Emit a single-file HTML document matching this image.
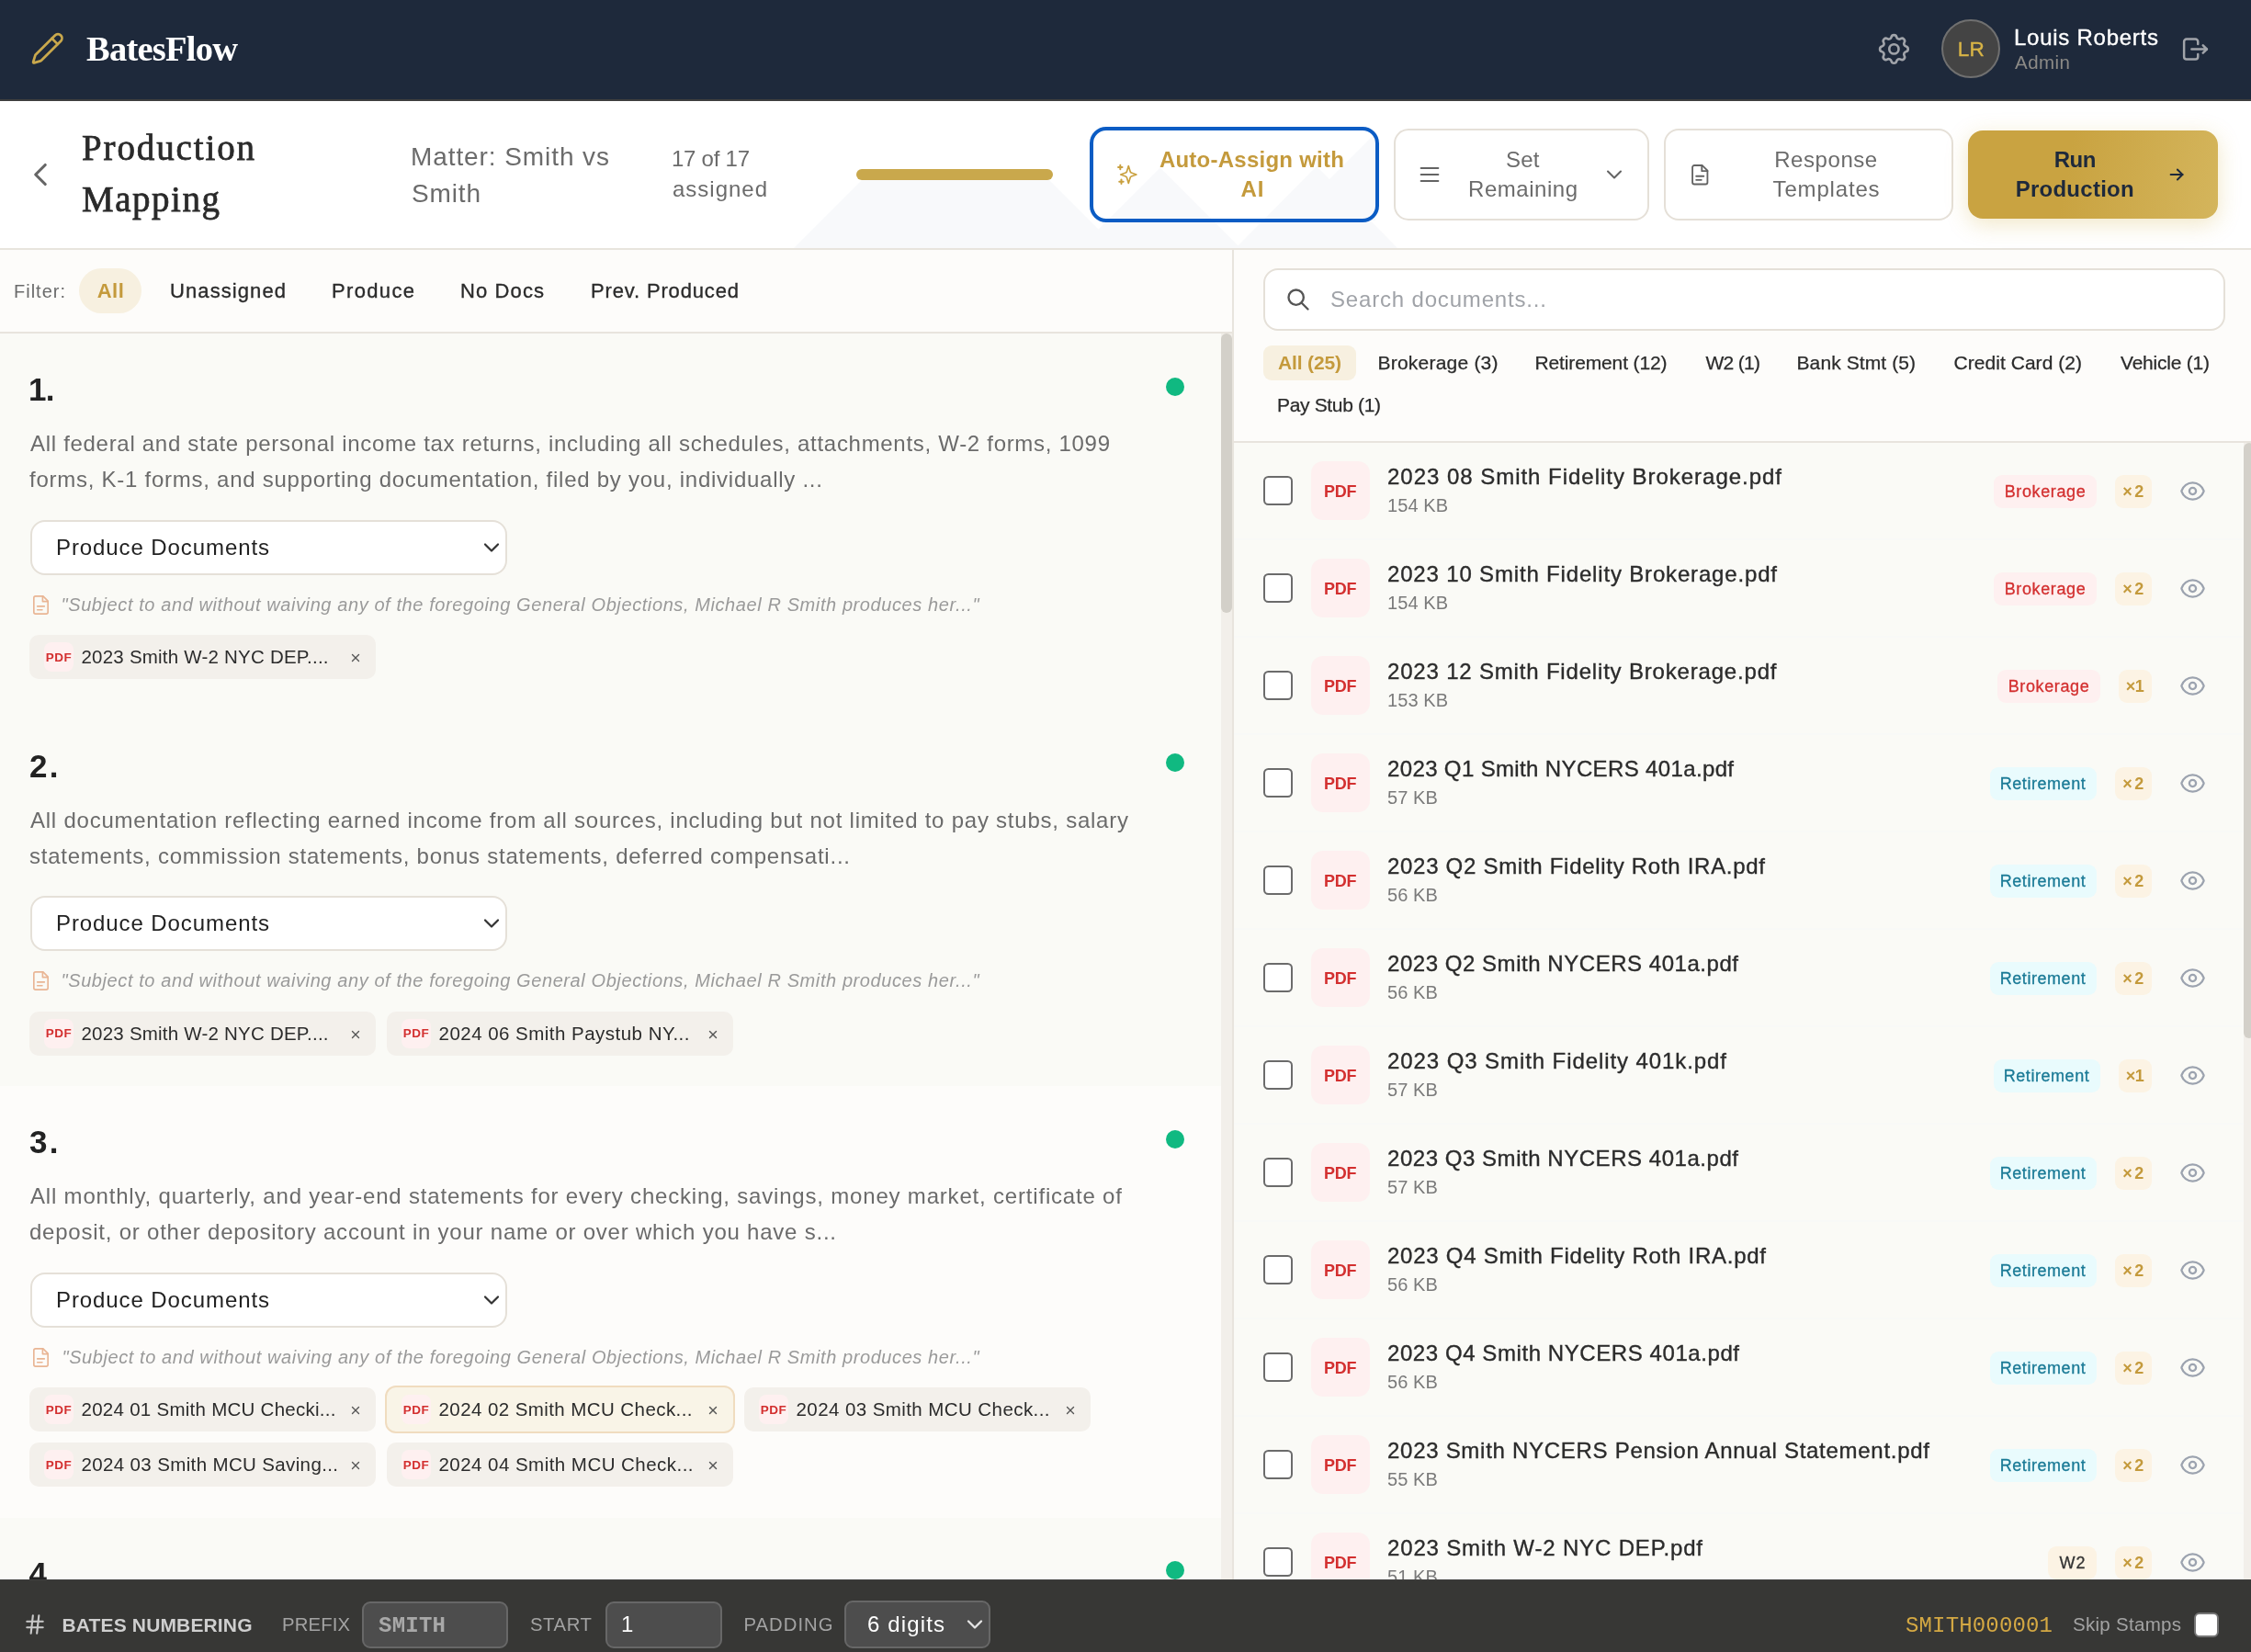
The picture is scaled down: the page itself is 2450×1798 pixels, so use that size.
<!DOCTYPE html>
<html lang="en"><head><meta charset="utf-8"><title>BatesFlow – Production Mapping</title>
<style>
html,body{margin:0;padding:0}
body{width:2450px;height:1798px;overflow:hidden;position:relative;background:#fdfcfa;font-family:"Liberation Sans",sans-serif}
.b{position:absolute;box-sizing:border-box}
.t{position:absolute;white-space:nowrap;display:block}
.g{position:absolute;left:0;top:0}
#app{position:absolute;left:0;top:0;width:2450px;height:1798px;will-change:transform}
@media (max-width:1400px){body{width:1225px;height:899px}#app{zoom:.5}}
</style></head><body><div id="app">

<header class="g">
<div class="b" style="left:0px;top:0px;width:2450px;height:110px;background:#1e293b;border-bottom:2px solid #3e3e3e;"></div>
<svg class="b" style="left:33.0px;top:33.9px;" width="37.6" height="37.6" viewBox="0 0 24 24" fill="none" stroke="#c9a84c" stroke-width="1.75" stroke-linecap="round" stroke-linejoin="round"><path d="M21.174 6.812a1 1 0 0 0-3.986-3.987L3.842 16.174a2 2 0 0 0-.5.83l-1.321 4.352a.5.5 0 0 0 .623.622l4.353-1.32a2 2 0 0 0 .83-.497z"/><path d="m15 5 4 4"/></svg>
<span class="t" id="logo" style="top:34.00px;font:700 38.5px/38.5px 'Liberation Serif', serif;color:#ffffff;letter-spacing:-0.762px;left:94.00px;">BatesFlow</span>
<svg class="b" style="left:2040.6px;top:32.6px;" width="40.8" height="40.8" viewBox="0 0 24 24" fill="none" stroke="#a1a4aa" stroke-width="1.55" stroke-linecap="round" stroke-linejoin="round"><path d="M10.325 4.317c.426 -1.756 2.924 -1.756 3.35 0a1.724 1.724 0 0 0 2.573 1.066c1.543 -.94 3.31 .826 2.37 2.37a1.724 1.724 0 0 0 1.065 2.572c1.756 .426 1.756 2.924 0 3.35a1.724 1.724 0 0 0 -1.066 2.573c.94 1.543 -.826 3.31 -2.37 2.37a1.724 1.724 0 0 0 -2.572 1.065c-.426 1.756 -2.924 1.756 -3.35 0a1.724 1.724 0 0 0 -2.573 -1.066c-1.543 .94 -3.31 -.826 -2.37 -2.37a1.724 1.724 0 0 0 -1.065 -2.572c-1.756 -.426 -1.756 -2.924 0 -3.35a1.724 1.724 0 0 0 1.066 -2.573c-.94 -1.543 .826 -3.31 2.37 -2.37c1 .608 2.296 .07 2.572 -1.065z"/><circle cx="12" cy="12" r="3"/></svg>
<div class="b" style="left:2113px;top:21px;width:64px;height:64px;background:#444444;border-radius:32px;border:2px solid #707070;"></div>
<span class="t" id="lr" style="top:43.00px;font:400 22.5px/22.5px 'Liberation Sans', sans-serif;color:#d8b446;letter-spacing:0.225px;-webkit-text-stroke:0.4px #d8b446;left:2145.40px;transform:translateX(-50%);">LR</span>
<span class="t" id="uname" style="top:29.00px;font:400 24px/24px 'Liberation Sans', sans-serif;color:#ffffff;letter-spacing:0.743px;-webkit-text-stroke:0.35px #ffffff;left:2192.00px;">Louis Roberts</span>
<span class="t" id="urole" style="top:58.00px;font:400 20.5px/20.5px 'Liberation Sans', sans-serif;color:#8c8a86;letter-spacing:0.470px;left:2193.00px;">Admin</span>
<svg class="b" style="left:2373.4px;top:36.6px;" width="33" height="33" viewBox="0 0 24 24" fill="none" stroke="#a1a4aa" stroke-width="1.8" stroke-linecap="round" stroke-linejoin="round"><path d="M14 8v-2a2 2 0 0 0 -2 -2h-7a2 2 0 0 0 -2 2v12a2 2 0 0 0 2 2h7a2 2 0 0 0 2 -2v-2"/><path d="M9 12h12l-3 -3"/><path d="M18 15l3 -3"/></svg>
</header>
<section class="g">
<div class="b" style="left:0px;top:110px;width:2450px;height:162px;background:#ffffff;border-bottom:2px solid #e8e4dd;"></div>
<svg class="b" style="left:0;top:110px" width="2450" height="160" viewBox="0 110 2450 160"><g fill="#f8f9fb"><polygon points="938,196 1142,196 1216,270 864,270"/><polygon points="1262.7,182.5 1350.2,270 1175.2,270"/><polygon points="1433,181 1521,270 1345,270"/><polygon points="1444,198 1497,145 1497,240 1488,240"/></g></svg>
<svg class="b" style="left:22.5px;top:169px;" width="42" height="42" viewBox="0 0 24 24" fill="none" stroke="#666666" stroke-width="1.8" stroke-linecap="round" stroke-linejoin="round"><path d="m15 18-6-6 6-6"/></svg>
<span class="t" id="h1a" style="top:141.00px;font:400 39px/39px 'Liberation Serif', serif;color:#2a2a2a;letter-spacing:1.871px;-webkit-text-stroke:0.75px #2a2a2a;left:89.00px;">Production</span>
<span class="t" id="h1b" style="top:197.00px;font:400 39px/39px 'Liberation Serif', serif;color:#2a2a2a;letter-spacing:1.529px;-webkit-text-stroke:0.75px #2a2a2a;left:89.00px;">Mapping</span>
<span class="t" id="matter1" style="top:157.00px;font:400 28px/28px 'Liberation Sans', sans-serif;color:#6b6b6b;letter-spacing:0.916px;left:447.00px;">Matter: Smith vs</span>
<span class="t" id="matter2" style="top:197.00px;font:400 28px/28px 'Liberation Sans', sans-serif;color:#6b6b6b;letter-spacing:0.855px;left:448.00px;">Smith</span>
<span class="t" id="cnt1" style="top:161.00px;font:400 24px/24px 'Liberation Sans', sans-serif;color:#6b6b6b;letter-spacing:-0.250px;left:731.00px;">17 of 17</span>
<span class="t" id="cnt2" style="top:194.00px;font:400 24px/24px 'Liberation Sans', sans-serif;color:#6b6b6b;letter-spacing:0.989px;left:732.00px;">assigned</span>
<div class="b" style="left:932px;top:184px;width:214px;height:12px;background:#c9a84c;border-radius:6px;"></div>
<div class="b" style="left:1186px;top:138px;width:315px;height:104px;background:#ffffff;border-radius:18px;border:4px solid #0b5cc4;background:transparent;"></div>
<svg class="b" style="left:1213px;top:176px;" width="28" height="28" viewBox="0 0 24 24" fill="none" stroke="#c9a03f" stroke-width="1.7" stroke-linecap="round" stroke-linejoin="round"><g transform="translate(13.1 12) scale(0.82 0.9) translate(-12 -12)"><path d="m12 3-1.912 5.813a2 2 0 0 1-1.275 1.275L3 12l5.813 1.912a2 2 0 0 1 1.275 1.275L12 21l1.912-5.813a2 2 0 0 1 1.275-1.275L21 12l-5.813-1.912a2 2 0 0 1-1.275-1.275L12 3Z"/></g><path d="M5.400 3.200v3.800"/><path d="M3.500 5.100h3.800"/><path d="M6.400 16.800v3.800"/><path d="M4.500 18.700h3.800"/></svg>
<span class="t" id="aa1" style="top:162.00px;font:700 24px/24px 'Liberation Sans', sans-serif;color:#c49a3c;letter-spacing:0.245px;left:1362.50px;transform:translateX(-50%);">Auto-Assign with</span>
<span class="t" id="aa2" style="top:194.00px;font:700 24px/24px 'Liberation Sans', sans-serif;color:#c49a3c;letter-spacing:0.998px;left:1363.50px;transform:translateX(-50%);">AI</span>
<div class="b" style="left:1517px;top:140px;width:277.5px;height:99.5px;background:#ffffff;border-radius:16px;border:2px solid #e5e0d8;"></div>
<svg class="b" style="left:1542px;top:176px;" width="28" height="28" viewBox="0 0 24 24" fill="none" stroke="#636363" stroke-width="1.75" stroke-linecap="round" stroke-linejoin="round"><path d="M4 6h16"/><path d="M4 12h16"/><path d="M4 18h16"/></svg>
<span class="t" id="sr1" style="top:162.00px;font:400 24px/24px 'Liberation Sans', sans-serif;color:#6b6b6b;letter-spacing:0.234px;left:1657.30px;transform:translateX(-50%);">Set</span>
<span class="t" id="sr2" style="top:194.00px;font:400 24px/24px 'Liberation Sans', sans-serif;color:#6b6b6b;letter-spacing:0.533px;left:1657.80px;transform:translateX(-50%);">Remaining</span>
<svg class="b" style="left:1743px;top:176px;" width="28" height="28" viewBox="0 0 24 24" fill="none" stroke="#636363" stroke-width="1.75" stroke-linecap="round" stroke-linejoin="round"><path d="m6 9 6 6 6-6"/></svg>
<div class="b" style="left:1811px;top:140px;width:314.5px;height:99.5px;background:#ffffff;border-radius:16px;border:2px solid #e5e0d8;"></div>
<svg class="b" style="left:1838px;top:177.75px;" width="24.5" height="24.5" viewBox="0 0 24 24" fill="none" stroke="#636363" stroke-width="1.8" stroke-linecap="round" stroke-linejoin="round"><path d="M14.5 2H6a2 2 0 0 0-2 2v16a2 2 0 0 0 2 2h12a2 2 0 0 0 2-2V7.5L14.5 2z"/><path d="M14 2v6h6"/><path d="M8 13.5h8"/><path d="M8 17.5h5.5"/></svg>
<span class="t" id="rt1" style="top:162.00px;font:400 24px/24px 'Liberation Sans', sans-serif;color:#6b6b6b;letter-spacing:0.561px;left:1987.50px;transform:translateX(-50%);">Response</span>
<span class="t" id="rt2" style="top:194.00px;font:400 24px/24px 'Liberation Sans', sans-serif;color:#6b6b6b;letter-spacing:0.828px;left:1988.00px;transform:translateX(-50%);">Templates</span>
<div class="b" style="left:2142px;top:142px;width:272px;height:95.5px;background:linear-gradient(100deg,#c9a341 0%,#c9a341 40%,#d4b55c 100%);border-radius:16px;box-shadow:0 6px 24px rgba(201,162,39,.26);"></div>
<span class="t" id="rp1" style="top:162.00px;font:700 24px/24px 'Liberation Sans', sans-serif;color:#1e293b;letter-spacing:-0.475px;left:2258.30px;transform:translateX(-50%);">Run</span>
<span class="t" id="rp2" style="top:194.00px;font:700 24px/24px 'Liberation Sans', sans-serif;color:#1e293b;letter-spacing:0.261px;left:2258.30px;transform:translateX(-50%);">Production</span>
<svg class="b" style="left:2357.6px;top:179px;" width="22" height="22" viewBox="0 0 24 24" fill="none" stroke="#1e293b" stroke-width="2.1" stroke-linecap="round" stroke-linejoin="round"><path d="M5 12h14"/><path d="M13 18l6-6"/><path d="M13 6l6 6"/></svg>
</section>
<main class="g">
<div class="b" style="left:0px;top:272px;width:1341px;height:91px;background:#fdfcfa;border-bottom:2px solid #e8e4dd;"></div>
<span class="t" id="flt" style="top:307.00px;font:400 20px/20px 'Liberation Sans', sans-serif;color:#6b6b6b;letter-spacing:0.998px;left:15.00px;">Filter:</span>
<div class="b" style="left:86px;top:292px;width:68px;height:49px;background:#f7f0e0;border-radius:25px;"></div>
<span class="t" id="f_all" style="top:306.00px;font:700 22px/22px 'Liberation Sans', sans-serif;color:#c49a3c;letter-spacing:0.439px;left:120.50px;transform:translateX(-50%);">All</span>
<span class="t" id="f0" style="top:306.00px;font:400 22px/22px 'Liberation Sans', sans-serif;color:#2b2b2b;letter-spacing:1.090px;-webkit-text-stroke:0.35px #2b2b2b;left:185.00px;">Unassigned</span>
<span class="t" id="f1" style="top:306.00px;font:400 22px/22px 'Liberation Sans', sans-serif;color:#2b2b2b;letter-spacing:1.341px;-webkit-text-stroke:0.35px #2b2b2b;left:361.00px;">Produce</span>
<span class="t" id="f2" style="top:306.00px;font:400 22px/22px 'Liberation Sans', sans-serif;color:#2b2b2b;letter-spacing:1.106px;-webkit-text-stroke:0.35px #2b2b2b;left:501.00px;">No Docs</span>
<span class="t" id="f3" style="top:306.00px;font:400 22px/22px 'Liberation Sans', sans-serif;color:#2b2b2b;letter-spacing:0.845px;-webkit-text-stroke:0.35px #2b2b2b;left:643.00px;">Prev. Produced</span>
<article class="g">
<div class="b" style="left:0px;top:363px;width:1329px;height:409.5px;background:#fafaf6;"></div>
<span class="t" id="num0" style="top:406.00px;font:700 35px/35px 'Liberation Sans', sans-serif;color:#222222;letter-spacing:-0.600px;left:31.00px;">1.</span>
<div class="b" style="left:1269px;top:410.75px;width:20px;height:20px;background:#10b981;border-radius:10px;"></div>
<span class="t" id="d0_0" style="top:471.00px;font:400 24px/24px 'Liberation Sans', sans-serif;color:#6b6b6b;letter-spacing:0.701px;left:33.00px;">All federal and state personal income tax returns, including all schedules, attachments, W-2 forms, 1099</span>
<span class="t" id="d0_1" style="top:510.00px;font:400 24px/24px 'Liberation Sans', sans-serif;color:#6b6b6b;letter-spacing:0.743px;left:32.00px;">forms, K-1 forms, and supporting documentation, filed by you, individually ...</span>
<div class="b" style="left:32.5px;top:565.5px;width:519px;height:60px;background:#ffffff;border-radius:16px;border:2px solid #e5e0d8;"></div>
<span class="t" id="sel0" style="top:584.00px;font:400 24px/24px 'Liberation Sans', sans-serif;color:#222222;letter-spacing:0.910px;left:61.00px;">Produce Documents</span>
<svg class="b" style="left:520.6px;top:581.5px;" width="28" height="28" viewBox="0 0 24 24" fill="none" stroke="#333333" stroke-width="1.9" stroke-linecap="round" stroke-linejoin="round"><path d="m6 9 6 6 6-6"/></svg>
<svg class="b" style="left:32.5px;top:646.5px;" width="23" height="23" viewBox="0 0 24 24" fill="none" stroke="#e9b594" stroke-width="1.7" stroke-linecap="round" stroke-linejoin="round"><path d="M14.5 2H6a2 2 0 0 0-2 2v16a2 2 0 0 0 2 2h12a2 2 0 0 0 2-2V7.5L14.5 2z"/><path d="M14 2v6h6"/><path d="M8 13.5h8"/><path d="M8 17.5h5.5"/></svg>
<span class="t" id="note0" style="top:648.00px;font:italic 400 20px/20px 'Liberation Sans', sans-serif;color:#9a9a9a;letter-spacing:0.594px;left:66.50px;">&quot;Subject to and without waiving any of the foregoing General Objections, Michael R Smith produces her...&quot;</span>
<div class="b" style="left:32px;top:691px;width:377px;height:48px;background:#f3f0eb;border-radius:10px;"></div>
<div class="b" style="left:48px;top:699px;width:32px;height:32px;background:#fef0f0;border-radius:8px;"></div>
<span class="t" id="cp0_0_0" style="top:709.00px;font:700 13.5px/13.5px 'Liberation Sans', sans-serif;color:#d32f2f;letter-spacing:0.500px;left:64.00px;transform:translateX(-50%);">PDF</span>
<span class="t" id="ch0_0_0" style="top:705.00px;font:400 20.5px/20.5px 'Liberation Sans', sans-serif;color:#2b2b2b;letter-spacing:0.217px;left:88.50px;">2023 Smith W-2 NYC DEP....</span>
<svg class="b" style="left:379.5px;top:709.4px;" width="14" height="14" viewBox="0 0 24 24" fill="none" stroke="#555555" stroke-width="2.4" stroke-linecap="round" stroke-linejoin="round"><path d="M18 6 6 18"/><path d="m6 6 12 12"/></svg>
</article>
<article class="g">
<div class="b" style="left:0px;top:772.5px;width:1329px;height:409.5px;background:#fafaf6;"></div>
<span class="t" id="num1" style="top:816.00px;font:700 35px/35px 'Liberation Sans', sans-serif;color:#222222;letter-spacing:2.400px;left:32.00px;">2.</span>
<div class="b" style="left:1269px;top:820.25px;width:20px;height:20px;background:#10b981;border-radius:10px;"></div>
<span class="t" id="d1_0" style="top:881.00px;font:400 24px/24px 'Liberation Sans', sans-serif;color:#6b6b6b;letter-spacing:0.765px;left:33.00px;">All documentation reflecting earned income from all sources, including but not limited to pay stubs, salary</span>
<span class="t" id="d1_1" style="top:920.00px;font:400 24px/24px 'Liberation Sans', sans-serif;color:#6b6b6b;letter-spacing:0.765px;left:32.00px;">statements, commission statements, bonus statements, deferred compensati...</span>
<div class="b" style="left:32.5px;top:975.0px;width:519px;height:60px;background:#ffffff;border-radius:16px;border:2px solid #e5e0d8;"></div>
<span class="t" id="sel1" style="top:993.00px;font:400 24px/24px 'Liberation Sans', sans-serif;color:#222222;letter-spacing:0.910px;left:61.00px;">Produce Documents</span>
<svg class="b" style="left:520.6px;top:991.0px;" width="28" height="28" viewBox="0 0 24 24" fill="none" stroke="#333333" stroke-width="1.9" stroke-linecap="round" stroke-linejoin="round"><path d="m6 9 6 6 6-6"/></svg>
<svg class="b" style="left:32.5px;top:1056.0px;" width="23" height="23" viewBox="0 0 24 24" fill="none" stroke="#e9b594" stroke-width="1.7" stroke-linecap="round" stroke-linejoin="round"><path d="M14.5 2H6a2 2 0 0 0-2 2v16a2 2 0 0 0 2 2h12a2 2 0 0 0 2-2V7.5L14.5 2z"/><path d="M14 2v6h6"/><path d="M8 13.5h8"/><path d="M8 17.5h5.5"/></svg>
<span class="t" id="note1" style="top:1057.00px;font:italic 400 20px/20px 'Liberation Sans', sans-serif;color:#9a9a9a;letter-spacing:0.594px;left:66.50px;">&quot;Subject to and without waiving any of the foregoing General Objections, Michael R Smith produces her...&quot;</span>
<div class="b" style="left:32px;top:1100.5px;width:377px;height:48px;background:#f3f0eb;border-radius:10px;"></div>
<div class="b" style="left:48px;top:1108.5px;width:32px;height:32px;background:#fef0f0;border-radius:8px;"></div>
<span class="t" id="cp1_0_0" style="top:1118.00px;font:700 13.5px/13.5px 'Liberation Sans', sans-serif;color:#d32f2f;letter-spacing:0.500px;left:64.00px;transform:translateX(-50%);">PDF</span>
<span class="t" id="ch1_0_0" style="top:1115.00px;font:400 20.5px/20.5px 'Liberation Sans', sans-serif;color:#2b2b2b;letter-spacing:0.217px;left:88.50px;">2023 Smith W-2 NYC DEP....</span>
<svg class="b" style="left:379.5px;top:1118.9px;" width="14" height="14" viewBox="0 0 24 24" fill="none" stroke="#555555" stroke-width="2.4" stroke-linecap="round" stroke-linejoin="round"><path d="M18 6 6 18"/><path d="m6 6 12 12"/></svg>
<div class="b" style="left:421px;top:1100.5px;width:377px;height:48px;background:#f3f0eb;border-radius:10px;"></div>
<div class="b" style="left:437px;top:1108.5px;width:32px;height:32px;background:#fef0f0;border-radius:8px;"></div>
<span class="t" id="cp1_0_1" style="top:1118.00px;font:700 13.5px/13.5px 'Liberation Sans', sans-serif;color:#d32f2f;letter-spacing:0.500px;left:453.00px;transform:translateX(-50%);">PDF</span>
<span class="t" id="ch1_0_1" style="top:1115.00px;font:400 20.5px/20.5px 'Liberation Sans', sans-serif;color:#2b2b2b;letter-spacing:0.477px;left:477.50px;">2024 06 Smith Paystub NY...</span>
<svg class="b" style="left:768.5px;top:1118.9px;" width="14" height="14" viewBox="0 0 24 24" fill="none" stroke="#555555" stroke-width="2.4" stroke-linecap="round" stroke-linejoin="round"><path d="M18 6 6 18"/><path d="m6 6 12 12"/></svg>
</article>
<article class="g">
<div class="b" style="left:0px;top:1182px;width:1329px;height:468px;background:#fdfcfa;"></div>
<span class="t" id="num2" style="top:1225.00px;font:700 35px/35px 'Liberation Sans', sans-serif;color:#222222;letter-spacing:2.400px;left:32.00px;">3.</span>
<div class="b" style="left:1269px;top:1229.75px;width:20px;height:20px;background:#10b981;border-radius:10px;"></div>
<span class="t" id="d2_0" style="top:1290.00px;font:400 24px/24px 'Liberation Sans', sans-serif;color:#6b6b6b;letter-spacing:0.811px;left:33.00px;">All monthly, quarterly, and year-end statements for every checking, savings, money market, certificate of</span>
<span class="t" id="d2_1" style="top:1329.00px;font:400 24px/24px 'Liberation Sans', sans-serif;color:#6b6b6b;letter-spacing:0.775px;left:32.00px;">deposit, or other depository account in your name or over which you have s...</span>
<div class="b" style="left:32.5px;top:1384.5px;width:519px;height:60px;background:#ffffff;border-radius:16px;border:2px solid #e5e0d8;"></div>
<span class="t" id="sel2" style="top:1403.00px;font:400 24px/24px 'Liberation Sans', sans-serif;color:#222222;letter-spacing:0.910px;left:61.00px;">Produce Documents</span>
<svg class="b" style="left:520.6px;top:1400.5px;" width="28" height="28" viewBox="0 0 24 24" fill="none" stroke="#333333" stroke-width="1.9" stroke-linecap="round" stroke-linejoin="round"><path d="m6 9 6 6 6-6"/></svg>
<svg class="b" style="left:32.5px;top:1465.5px;" width="23" height="23" viewBox="0 0 24 24" fill="none" stroke="#e9b594" stroke-width="1.7" stroke-linecap="round" stroke-linejoin="round"><path d="M14.5 2H6a2 2 0 0 0-2 2v16a2 2 0 0 0 2 2h12a2 2 0 0 0 2-2V7.5L14.5 2z"/><path d="M14 2v6h6"/><path d="M8 13.5h8"/><path d="M8 17.5h5.5"/></svg>
<span class="t" id="note2" style="top:1467.00px;font:italic 400 20px/20px 'Liberation Sans', sans-serif;color:#9a9a9a;letter-spacing:0.584px;left:67.50px;">&quot;Subject to and without waiving any of the foregoing General Objections, Michael R Smith produces her...&quot;</span>
<div class="b" style="left:32px;top:1510px;width:377px;height:48px;background:#f3f0eb;border-radius:10px;"></div>
<div class="b" style="left:48px;top:1518px;width:32px;height:32px;background:#fef0f0;border-radius:8px;"></div>
<span class="t" id="cp2_0_0" style="top:1528.00px;font:700 13.5px/13.5px 'Liberation Sans', sans-serif;color:#d32f2f;letter-spacing:0.500px;left:64.00px;transform:translateX(-50%);">PDF</span>
<span class="t" id="ch2_0_0" style="top:1524.00px;font:400 20.5px/20.5px 'Liberation Sans', sans-serif;color:#2b2b2b;letter-spacing:0.268px;left:88.50px;">2024 01 Smith MCU Checki...</span>
<svg class="b" style="left:379.5px;top:1528.4px;" width="14" height="14" viewBox="0 0 24 24" fill="none" stroke="#555555" stroke-width="2.4" stroke-linecap="round" stroke-linejoin="round"><path d="M18 6 6 18"/><path d="m6 6 12 12"/></svg>
<div class="b" style="left:419px;top:1508px;width:381px;height:52px;background:#f9f4e7;border-radius:12px;border:2px solid #f0dcbf;"></div>
<div class="b" style="left:437px;top:1518px;width:32px;height:32px;background:#fef0f0;border-radius:8px;"></div>
<span class="t" id="cp2_0_1" style="top:1528.00px;font:700 13.5px/13.5px 'Liberation Sans', sans-serif;color:#d32f2f;letter-spacing:0.500px;left:453.00px;transform:translateX(-50%);">PDF</span>
<span class="t" id="ch2_0_1" style="top:1524.00px;font:400 20.5px/20.5px 'Liberation Sans', sans-serif;color:#2b2b2b;letter-spacing:0.421px;left:477.50px;">2024 02 Smith MCU Check...</span>
<svg class="b" style="left:768.5px;top:1528.4px;" width="14" height="14" viewBox="0 0 24 24" fill="none" stroke="#555555" stroke-width="2.4" stroke-linecap="round" stroke-linejoin="round"><path d="M18 6 6 18"/><path d="m6 6 12 12"/></svg>
<div class="b" style="left:810px;top:1510px;width:377px;height:48px;background:#f3f0eb;border-radius:10px;"></div>
<div class="b" style="left:826px;top:1518px;width:32px;height:32px;background:#fef0f0;border-radius:8px;"></div>
<span class="t" id="cp2_0_2" style="top:1528.00px;font:700 13.5px/13.5px 'Liberation Sans', sans-serif;color:#d32f2f;letter-spacing:0.500px;left:842.00px;transform:translateX(-50%);">PDF</span>
<span class="t" id="ch2_0_2" style="top:1524.00px;font:400 20.5px/20.5px 'Liberation Sans', sans-serif;color:#2b2b2b;letter-spacing:0.421px;left:866.50px;">2024 03 Smith MCU Check...</span>
<svg class="b" style="left:1157.5px;top:1528.4px;" width="14" height="14" viewBox="0 0 24 24" fill="none" stroke="#555555" stroke-width="2.4" stroke-linecap="round" stroke-linejoin="round"><path d="M18 6 6 18"/><path d="m6 6 12 12"/></svg>
<div class="b" style="left:32px;top:1570px;width:377px;height:48px;background:#f3f0eb;border-radius:10px;"></div>
<div class="b" style="left:48px;top:1578px;width:32px;height:32px;background:#fef0f0;border-radius:8px;"></div>
<span class="t" id="cp2_1_0" style="top:1588.00px;font:700 13.5px/13.5px 'Liberation Sans', sans-serif;color:#d32f2f;letter-spacing:0.500px;left:64.00px;transform:translateX(-50%);">PDF</span>
<span class="t" id="ch2_1_0" style="top:1584.00px;font:400 20.5px/20.5px 'Liberation Sans', sans-serif;color:#2b2b2b;letter-spacing:0.362px;left:88.50px;">2024 03 Smith MCU Saving...</span>
<svg class="b" style="left:379.5px;top:1588.4px;" width="14" height="14" viewBox="0 0 24 24" fill="none" stroke="#555555" stroke-width="2.4" stroke-linecap="round" stroke-linejoin="round"><path d="M18 6 6 18"/><path d="m6 6 12 12"/></svg>
<div class="b" style="left:421px;top:1570px;width:377px;height:48px;background:#f3f0eb;border-radius:10px;"></div>
<div class="b" style="left:437px;top:1578px;width:32px;height:32px;background:#fef0f0;border-radius:8px;"></div>
<span class="t" id="cp2_1_1" style="top:1588.00px;font:700 13.5px/13.5px 'Liberation Sans', sans-serif;color:#d32f2f;letter-spacing:0.500px;left:453.00px;transform:translateX(-50%);">PDF</span>
<span class="t" id="ch2_1_1" style="top:1584.00px;font:400 20.5px/20.5px 'Liberation Sans', sans-serif;color:#2b2b2b;letter-spacing:0.461px;left:477.50px;">2024 04 Smith MCU Check...</span>
<svg class="b" style="left:768.5px;top:1588.4px;" width="14" height="14" viewBox="0 0 24 24" fill="none" stroke="#555555" stroke-width="2.4" stroke-linecap="round" stroke-linejoin="round"><path d="M18 6 6 18"/><path d="m6 6 12 12"/></svg>
</article>
<article class="g">
<div class="b" style="left:0px;top:1651.5px;width:1329px;height:410px;background:#fafaf6;"></div>
<span class="t" id="num3" style="top:1695.00px;font:700 35px/35px 'Liberation Sans', sans-serif;color:#222222;letter-spacing:2.400px;left:31.50px;">4.</span>
<div class="b" style="left:1269px;top:1699.25px;width:20px;height:20px;background:#10b981;border-radius:10px;"></div>
</article>
<div class="b" style="left:1329px;top:363px;width:12px;height:1360px;background:#f2efea;"></div>
<div class="b" style="left:1329px;top:363px;width:12px;height:304px;background:#d3d0c9;border-radius:6px;"></div>
</main>
<aside class="g">
<div class="b" style="left:1341px;top:272px;width:1113px;height:1460px;background:#fafaf6;border-left:2px solid #e8e4dd;"></div>
<div class="b" style="left:1343px;top:272px;width:1111px;height:210px;background:#fdfcfa;border-bottom:2px solid #e8e4dd;"></div>
<div class="b" style="left:1375px;top:292px;width:1047px;height:67.5px;background:#ffffff;border-radius:16px;border:2px solid #e5e0d8;"></div>
<svg class="b" style="left:1399px;top:311.5px;" width="28" height="28" viewBox="0 0 24 24" fill="none" stroke="#555555" stroke-width="2" stroke-linecap="round" stroke-linejoin="round"><circle cx="10" cy="10" r="7"/><path d="M21 21l-6 -6"/></svg>
<span class="t" id="srch" style="top:314.00px;font:400 24px/24px 'Liberation Sans', sans-serif;color:#a0a3a8;letter-spacing:0.827px;left:1448.00px;">Search documents...</span>
<div class="b" style="left:1375px;top:376px;width:100.75px;height:38px;background:#f7f0e0;border-radius:9px;"></div>
<span class="t" id="tab0" style="top:384.00px;font:700 21px/21px 'Liberation Sans', sans-serif;color:#c49a3c;letter-spacing:-0.145px;left:1391.00px;">All (25)</span>
<span class="t" id="tab1" style="top:384.00px;font:400 21px/21px 'Liberation Sans', sans-serif;color:#2b2b2b;letter-spacing:0.217px;-webkit-text-stroke:0.25px #2b2b2b;left:1499.50px;">Brokerage (3)</span>
<span class="t" id="tab2" style="top:384.00px;font:400 21px/21px 'Liberation Sans', sans-serif;color:#2b2b2b;letter-spacing:-0.136px;-webkit-text-stroke:0.25px #2b2b2b;left:1670.50px;">Retirement (12)</span>
<span class="t" id="tab3" style="top:384.00px;font:400 21px/21px 'Liberation Sans', sans-serif;color:#2b2b2b;letter-spacing:-0.702px;-webkit-text-stroke:0.25px #2b2b2b;left:1856.50px;">W2 (1)</span>
<span class="t" id="tab4" style="top:384.00px;font:400 21px/21px 'Liberation Sans', sans-serif;color:#2b2b2b;letter-spacing:0.096px;-webkit-text-stroke:0.25px #2b2b2b;left:1955.50px;">Bank Stmt (5)</span>
<span class="t" id="tab5" style="top:384.00px;font:400 21px/21px 'Liberation Sans', sans-serif;color:#2b2b2b;letter-spacing:0.046px;-webkit-text-stroke:0.25px #2b2b2b;left:2126.50px;">Credit Card (2)</span>
<span class="t" id="tab6" style="top:384.00px;font:400 21px/21px 'Liberation Sans', sans-serif;color:#2b2b2b;letter-spacing:-0.222px;-webkit-text-stroke:0.25px #2b2b2b;left:2308.00px;">Vehicle (1)</span>
<span class="t" id="tab7" style="top:430.00px;font:400 21px/21px 'Liberation Sans', sans-serif;color:#2b2b2b;letter-spacing:-0.338px;-webkit-text-stroke:0.25px #2b2b2b;left:1390.00px;">Pay Stub (1)</span>
<div class="g">
<div class="b" style="left:1343px;top:586px;width:1099px;height:2px;background:#f8f9f7;"></div>
<div class="b" style="left:1375px;top:518px;width:32px;height:32px;background:#ffffff;border-radius:5.5px;border:2px solid #6b6b6b;"></div>
<div class="b" style="left:1427px;top:502px;width:64px;height:64px;background:#fef0f0;border-radius:13px;"></div>
<span class="t" id="dp0" style="top:526.00px;font:700 18px/18px 'Liberation Sans', sans-serif;color:#d32f2f;letter-spacing:-0.250px;left:1458.50px;transform:translateX(-50%);">PDF</span>
<span class="t" id="dn0" style="top:507.00px;font:400 24px/24px 'Liberation Sans', sans-serif;color:#2b2b2b;letter-spacing:0.975px;-webkit-text-stroke:0.36px #2b2b2b;left:1510.00px;">2023 08 Smith Fidelity Brokerage.pdf</span>
<span class="t" id="ds0" style="top:540.00px;font:400 20px/20px 'Liberation Sans', sans-serif;color:#7a7a7a;letter-spacing:0.077px;left:1510.00px;">154 KB</span>
<div class="b" style="left:2170px;top:517px;width:112px;height:35.5px;background:#fef0f0;border-radius:9px;"></div>
<span class="t" id="db0" style="top:526.00px;font:400 18px/18px 'Liberation Sans', sans-serif;color:#d32f2f;letter-spacing:0.617px;-webkit-text-stroke:0.3px #d32f2f;left:2226.00px;transform:translateX(-50%);">Brokerage</span>
<div class="b" style="left:2302px;top:517px;width:40px;height:35.5px;background:#fcf3e4;border-radius:9px;"></div>
<span class="t" id="dc0" style="top:526.00px;font:700 18px/18px 'Liberation Sans', sans-serif;color:#c49a3c;letter-spacing:2.400px;left:2323.00px;transform:translateX(-50%);">×2</span>
<svg class="b" style="left:2371.5px;top:519.5px;" width="29" height="29" viewBox="0 0 24 24" fill="none" stroke="#9ca3af" stroke-width="1.9" stroke-linecap="round" stroke-linejoin="round"><path d="M2.036 12.322a1.012 1.012 0 0 1 0-.639C3.423 7.51 7.36 4.5 12 4.5c4.638 0 8.573 3.007 9.963 7.178.07.207.07.431 0 .639C20.577 16.49 16.64 19.5 12 19.5c-4.638 0-8.573-3.007-9.963-7.178Z"/><circle cx="12" cy="12" r="3"/></svg>
</div>
<div class="g">
<div class="b" style="left:1343px;top:692px;width:1099px;height:2px;background:#f8f9f7;"></div>
<div class="b" style="left:1375px;top:624px;width:32px;height:32px;background:#ffffff;border-radius:5.5px;border:2px solid #6b6b6b;"></div>
<div class="b" style="left:1427px;top:608px;width:64px;height:64px;background:#fef0f0;border-radius:13px;"></div>
<span class="t" id="dp1" style="top:632.00px;font:700 18px/18px 'Liberation Sans', sans-serif;color:#d32f2f;letter-spacing:-0.250px;left:1458.50px;transform:translateX(-50%);">PDF</span>
<span class="t" id="dn1" style="top:613.00px;font:400 24px/24px 'Liberation Sans', sans-serif;color:#2b2b2b;letter-spacing:0.832px;-webkit-text-stroke:0.36px #2b2b2b;left:1510.00px;">2023 10 Smith Fidelity Brokerage.pdf</span>
<span class="t" id="ds1" style="top:646.00px;font:400 20px/20px 'Liberation Sans', sans-serif;color:#7a7a7a;letter-spacing:0.077px;left:1510.00px;">154 KB</span>
<div class="b" style="left:2170px;top:623px;width:112px;height:35.5px;background:#fef0f0;border-radius:9px;"></div>
<span class="t" id="db1" style="top:632.00px;font:400 18px/18px 'Liberation Sans', sans-serif;color:#d32f2f;letter-spacing:0.617px;-webkit-text-stroke:0.3px #d32f2f;left:2226.00px;transform:translateX(-50%);">Brokerage</span>
<div class="b" style="left:2302px;top:623px;width:40px;height:35.5px;background:#fcf3e4;border-radius:9px;"></div>
<span class="t" id="dc1" style="top:632.00px;font:700 18px/18px 'Liberation Sans', sans-serif;color:#c49a3c;letter-spacing:2.400px;left:2323.00px;transform:translateX(-50%);">×2</span>
<svg class="b" style="left:2371.5px;top:625.5px;" width="29" height="29" viewBox="0 0 24 24" fill="none" stroke="#9ca3af" stroke-width="1.9" stroke-linecap="round" stroke-linejoin="round"><path d="M2.036 12.322a1.012 1.012 0 0 1 0-.639C3.423 7.51 7.36 4.5 12 4.5c4.638 0 8.573 3.007 9.963 7.178.07.207.07.431 0 .639C20.577 16.49 16.64 19.5 12 19.5c-4.638 0-8.573-3.007-9.963-7.178Z"/><circle cx="12" cy="12" r="3"/></svg>
</div>
<div class="g">
<div class="b" style="left:1343px;top:798px;width:1099px;height:2px;background:#f8f9f7;"></div>
<div class="b" style="left:1375px;top:730px;width:32px;height:32px;background:#ffffff;border-radius:5.5px;border:2px solid #6b6b6b;"></div>
<div class="b" style="left:1427px;top:714px;width:64px;height:64px;background:#fef0f0;border-radius:13px;"></div>
<span class="t" id="dp2" style="top:738.00px;font:700 18px/18px 'Liberation Sans', sans-serif;color:#d32f2f;letter-spacing:-0.250px;left:1458.50px;transform:translateX(-50%);">PDF</span>
<span class="t" id="dn2" style="top:719.00px;font:400 24px/24px 'Liberation Sans', sans-serif;color:#2b2b2b;letter-spacing:0.817px;-webkit-text-stroke:0.36px #2b2b2b;left:1510.00px;">2023 12 Smith Fidelity Brokerage.pdf</span>
<span class="t" id="ds2" style="top:752.00px;font:400 20px/20px 'Liberation Sans', sans-serif;color:#7a7a7a;letter-spacing:0.077px;left:1510.00px;">153 KB</span>
<div class="b" style="left:2174px;top:729px;width:112px;height:35.5px;background:#fef0f0;border-radius:9px;"></div>
<span class="t" id="db2" style="top:738.00px;font:400 18px/18px 'Liberation Sans', sans-serif;color:#d32f2f;letter-spacing:0.617px;-webkit-text-stroke:0.3px #d32f2f;left:2230.00px;transform:translateX(-50%);">Brokerage</span>
<div class="b" style="left:2306px;top:729px;width:36px;height:35.5px;background:#fcf3e4;border-radius:9px;"></div>
<span class="t" id="dc2" style="top:738.00px;font:700 18px/18px 'Liberation Sans', sans-serif;color:#c49a3c;letter-spacing:-0.528px;left:2323.50px;transform:translateX(-50%);">×1</span>
<svg class="b" style="left:2371.5px;top:731.5px;" width="29" height="29" viewBox="0 0 24 24" fill="none" stroke="#9ca3af" stroke-width="1.9" stroke-linecap="round" stroke-linejoin="round"><path d="M2.036 12.322a1.012 1.012 0 0 1 0-.639C3.423 7.51 7.36 4.5 12 4.5c4.638 0 8.573 3.007 9.963 7.178.07.207.07.431 0 .639C20.577 16.49 16.64 19.5 12 19.5c-4.638 0-8.573-3.007-9.963-7.178Z"/><circle cx="12" cy="12" r="3"/></svg>
</div>
<div class="g">
<div class="b" style="left:1343px;top:904px;width:1099px;height:2px;background:#f8f9f7;"></div>
<div class="b" style="left:1375px;top:836px;width:32px;height:32px;background:#ffffff;border-radius:5.5px;border:2px solid #6b6b6b;"></div>
<div class="b" style="left:1427px;top:820px;width:64px;height:64px;background:#fef0f0;border-radius:13px;"></div>
<span class="t" id="dp3" style="top:844.00px;font:700 18px/18px 'Liberation Sans', sans-serif;color:#d32f2f;letter-spacing:-0.250px;left:1458.50px;transform:translateX(-50%);">PDF</span>
<span class="t" id="dn3" style="top:825.00px;font:400 24px/24px 'Liberation Sans', sans-serif;color:#2b2b2b;letter-spacing:0.362px;-webkit-text-stroke:0.36px #2b2b2b;left:1510.00px;">2023 Q1 Smith NYCERS 401a.pdf</span>
<span class="t" id="ds3" style="top:858.00px;font:400 20px/20px 'Liberation Sans', sans-serif;color:#7a7a7a;letter-spacing:0.077px;left:1510.00px;">57 KB</span>
<div class="b" style="left:2166px;top:835px;width:116px;height:35.5px;background:#e9fbfd;border-radius:9px;"></div>
<span class="t" id="db3" style="top:844.00px;font:400 18px/18px 'Liberation Sans', sans-serif;color:#1a7a96;letter-spacing:0.551px;-webkit-text-stroke:0.3px #1a7a96;left:2223.50px;transform:translateX(-50%);">Retirement</span>
<div class="b" style="left:2302px;top:835px;width:40px;height:35.5px;background:#fcf3e4;border-radius:9px;"></div>
<span class="t" id="dc3" style="top:844.00px;font:700 18px/18px 'Liberation Sans', sans-serif;color:#c49a3c;letter-spacing:2.400px;left:2323.00px;transform:translateX(-50%);">×2</span>
<svg class="b" style="left:2371.5px;top:837.5px;" width="29" height="29" viewBox="0 0 24 24" fill="none" stroke="#9ca3af" stroke-width="1.9" stroke-linecap="round" stroke-linejoin="round"><path d="M2.036 12.322a1.012 1.012 0 0 1 0-.639C3.423 7.51 7.36 4.5 12 4.5c4.638 0 8.573 3.007 9.963 7.178.07.207.07.431 0 .639C20.577 16.49 16.64 19.5 12 19.5c-4.638 0-8.573-3.007-9.963-7.178Z"/><circle cx="12" cy="12" r="3"/></svg>
</div>
<div class="g">
<div class="b" style="left:1343px;top:1010px;width:1099px;height:2px;background:#f8f9f7;"></div>
<div class="b" style="left:1375px;top:942px;width:32px;height:32px;background:#ffffff;border-radius:5.5px;border:2px solid #6b6b6b;"></div>
<div class="b" style="left:1427px;top:926px;width:64px;height:64px;background:#fef0f0;border-radius:13px;"></div>
<span class="t" id="dp4" style="top:950.00px;font:700 18px/18px 'Liberation Sans', sans-serif;color:#d32f2f;letter-spacing:-0.250px;left:1458.50px;transform:translateX(-50%);">PDF</span>
<span class="t" id="dn4" style="top:931.00px;font:400 24px/24px 'Liberation Sans', sans-serif;color:#2b2b2b;letter-spacing:0.711px;-webkit-text-stroke:0.36px #2b2b2b;left:1510.00px;">2023 Q2 Smith Fidelity Roth IRA.pdf</span>
<span class="t" id="ds4" style="top:964.00px;font:400 20px/20px 'Liberation Sans', sans-serif;color:#7a7a7a;letter-spacing:0.077px;left:1510.00px;">56 KB</span>
<div class="b" style="left:2166px;top:941px;width:116px;height:35.5px;background:#e9fbfd;border-radius:9px;"></div>
<span class="t" id="db4" style="top:950.00px;font:400 18px/18px 'Liberation Sans', sans-serif;color:#1a7a96;letter-spacing:0.551px;-webkit-text-stroke:0.3px #1a7a96;left:2223.50px;transform:translateX(-50%);">Retirement</span>
<div class="b" style="left:2302px;top:941px;width:40px;height:35.5px;background:#fcf3e4;border-radius:9px;"></div>
<span class="t" id="dc4" style="top:950.00px;font:700 18px/18px 'Liberation Sans', sans-serif;color:#c49a3c;letter-spacing:2.400px;left:2323.00px;transform:translateX(-50%);">×2</span>
<svg class="b" style="left:2371.5px;top:943.5px;" width="29" height="29" viewBox="0 0 24 24" fill="none" stroke="#9ca3af" stroke-width="1.9" stroke-linecap="round" stroke-linejoin="round"><path d="M2.036 12.322a1.012 1.012 0 0 1 0-.639C3.423 7.51 7.36 4.5 12 4.5c4.638 0 8.573 3.007 9.963 7.178.07.207.07.431 0 .639C20.577 16.49 16.64 19.5 12 19.5c-4.638 0-8.573-3.007-9.963-7.178Z"/><circle cx="12" cy="12" r="3"/></svg>
</div>
<div class="g">
<div class="b" style="left:1343px;top:1116px;width:1099px;height:2px;background:#f8f9f7;"></div>
<div class="b" style="left:1375px;top:1048px;width:32px;height:32px;background:#ffffff;border-radius:5.5px;border:2px solid #6b6b6b;"></div>
<div class="b" style="left:1427px;top:1032px;width:64px;height:64px;background:#fef0f0;border-radius:13px;"></div>
<span class="t" id="dp5" style="top:1056.00px;font:700 18px/18px 'Liberation Sans', sans-serif;color:#d32f2f;letter-spacing:-0.250px;left:1458.50px;transform:translateX(-50%);">PDF</span>
<span class="t" id="dn5" style="top:1037.00px;font:400 24px/24px 'Liberation Sans', sans-serif;color:#2b2b2b;letter-spacing:0.541px;-webkit-text-stroke:0.36px #2b2b2b;left:1510.00px;">2023 Q2 Smith NYCERS 401a.pdf</span>
<span class="t" id="ds5" style="top:1070.00px;font:400 20px/20px 'Liberation Sans', sans-serif;color:#7a7a7a;letter-spacing:0.077px;left:1510.00px;">56 KB</span>
<div class="b" style="left:2166px;top:1047px;width:116px;height:35.5px;background:#e9fbfd;border-radius:9px;"></div>
<span class="t" id="db5" style="top:1056.00px;font:400 18px/18px 'Liberation Sans', sans-serif;color:#1a7a96;letter-spacing:0.551px;-webkit-text-stroke:0.3px #1a7a96;left:2223.50px;transform:translateX(-50%);">Retirement</span>
<div class="b" style="left:2302px;top:1047px;width:40px;height:35.5px;background:#fcf3e4;border-radius:9px;"></div>
<span class="t" id="dc5" style="top:1056.00px;font:700 18px/18px 'Liberation Sans', sans-serif;color:#c49a3c;letter-spacing:2.400px;left:2323.00px;transform:translateX(-50%);">×2</span>
<svg class="b" style="left:2371.5px;top:1049.5px;" width="29" height="29" viewBox="0 0 24 24" fill="none" stroke="#9ca3af" stroke-width="1.9" stroke-linecap="round" stroke-linejoin="round"><path d="M2.036 12.322a1.012 1.012 0 0 1 0-.639C3.423 7.51 7.36 4.5 12 4.5c4.638 0 8.573 3.007 9.963 7.178.07.207.07.431 0 .639C20.577 16.49 16.64 19.5 12 19.5c-4.638 0-8.573-3.007-9.963-7.178Z"/><circle cx="12" cy="12" r="3"/></svg>
</div>
<div class="g">
<div class="b" style="left:1343px;top:1222px;width:1099px;height:2px;background:#f8f9f7;"></div>
<div class="b" style="left:1375px;top:1154px;width:32px;height:32px;background:#ffffff;border-radius:5.5px;border:2px solid #6b6b6b;"></div>
<div class="b" style="left:1427px;top:1138px;width:64px;height:64px;background:#fef0f0;border-radius:13px;"></div>
<span class="t" id="dp6" style="top:1162.00px;font:700 18px/18px 'Liberation Sans', sans-serif;color:#d32f2f;letter-spacing:-0.250px;left:1458.50px;transform:translateX(-50%);">PDF</span>
<span class="t" id="dn6" style="top:1143.00px;font:400 24px/24px 'Liberation Sans', sans-serif;color:#2b2b2b;letter-spacing:0.915px;-webkit-text-stroke:0.36px #2b2b2b;left:1510.00px;">2023 Q3 Smith Fidelity 401k.pdf</span>
<span class="t" id="ds6" style="top:1176.00px;font:400 20px/20px 'Liberation Sans', sans-serif;color:#7a7a7a;letter-spacing:0.077px;left:1510.00px;">57 KB</span>
<div class="b" style="left:2170px;top:1153px;width:116px;height:35.5px;background:#e9fbfd;border-radius:9px;"></div>
<span class="t" id="db6" style="top:1162.00px;font:400 18px/18px 'Liberation Sans', sans-serif;color:#1a7a96;letter-spacing:0.551px;-webkit-text-stroke:0.3px #1a7a96;left:2227.50px;transform:translateX(-50%);">Retirement</span>
<div class="b" style="left:2306px;top:1153px;width:36px;height:35.5px;background:#fcf3e4;border-radius:9px;"></div>
<span class="t" id="dc6" style="top:1162.00px;font:700 18px/18px 'Liberation Sans', sans-serif;color:#c49a3c;letter-spacing:-0.528px;left:2323.50px;transform:translateX(-50%);">×1</span>
<svg class="b" style="left:2371.5px;top:1155.5px;" width="29" height="29" viewBox="0 0 24 24" fill="none" stroke="#9ca3af" stroke-width="1.9" stroke-linecap="round" stroke-linejoin="round"><path d="M2.036 12.322a1.012 1.012 0 0 1 0-.639C3.423 7.51 7.36 4.5 12 4.5c4.638 0 8.573 3.007 9.963 7.178.07.207.07.431 0 .639C20.577 16.49 16.64 19.5 12 19.5c-4.638 0-8.573-3.007-9.963-7.178Z"/><circle cx="12" cy="12" r="3"/></svg>
</div>
<div class="g">
<div class="b" style="left:1343px;top:1328px;width:1099px;height:2px;background:#f8f9f7;"></div>
<div class="b" style="left:1375px;top:1260px;width:32px;height:32px;background:#ffffff;border-radius:5.5px;border:2px solid #6b6b6b;"></div>
<div class="b" style="left:1427px;top:1244px;width:64px;height:64px;background:#fef0f0;border-radius:13px;"></div>
<span class="t" id="dp7" style="top:1268.00px;font:700 18px/18px 'Liberation Sans', sans-serif;color:#d32f2f;letter-spacing:-0.250px;left:1458.50px;transform:translateX(-50%);">PDF</span>
<span class="t" id="dn7" style="top:1249.00px;font:400 24px/24px 'Liberation Sans', sans-serif;color:#2b2b2b;letter-spacing:0.540px;-webkit-text-stroke:0.36px #2b2b2b;left:1510.00px;">2023 Q3 Smith NYCERS 401a.pdf</span>
<span class="t" id="ds7" style="top:1282.00px;font:400 20px/20px 'Liberation Sans', sans-serif;color:#7a7a7a;letter-spacing:0.077px;left:1510.00px;">57 KB</span>
<div class="b" style="left:2166px;top:1259px;width:116px;height:35.5px;background:#e9fbfd;border-radius:9px;"></div>
<span class="t" id="db7" style="top:1268.00px;font:400 18px/18px 'Liberation Sans', sans-serif;color:#1a7a96;letter-spacing:0.551px;-webkit-text-stroke:0.3px #1a7a96;left:2223.50px;transform:translateX(-50%);">Retirement</span>
<div class="b" style="left:2302px;top:1259px;width:40px;height:35.5px;background:#fcf3e4;border-radius:9px;"></div>
<span class="t" id="dc7" style="top:1268.00px;font:700 18px/18px 'Liberation Sans', sans-serif;color:#c49a3c;letter-spacing:2.400px;left:2323.00px;transform:translateX(-50%);">×2</span>
<svg class="b" style="left:2371.5px;top:1261.5px;" width="29" height="29" viewBox="0 0 24 24" fill="none" stroke="#9ca3af" stroke-width="1.9" stroke-linecap="round" stroke-linejoin="round"><path d="M2.036 12.322a1.012 1.012 0 0 1 0-.639C3.423 7.51 7.36 4.5 12 4.5c4.638 0 8.573 3.007 9.963 7.178.07.207.07.431 0 .639C20.577 16.49 16.64 19.5 12 19.5c-4.638 0-8.573-3.007-9.963-7.178Z"/><circle cx="12" cy="12" r="3"/></svg>
</div>
<div class="g">
<div class="b" style="left:1343px;top:1434px;width:1099px;height:2px;background:#f8f9f7;"></div>
<div class="b" style="left:1375px;top:1366px;width:32px;height:32px;background:#ffffff;border-radius:5.5px;border:2px solid #6b6b6b;"></div>
<div class="b" style="left:1427px;top:1350px;width:64px;height:64px;background:#fef0f0;border-radius:13px;"></div>
<span class="t" id="dp8" style="top:1374.00px;font:700 18px/18px 'Liberation Sans', sans-serif;color:#d32f2f;letter-spacing:-0.250px;left:1458.50px;transform:translateX(-50%);">PDF</span>
<span class="t" id="dn8" style="top:1355.00px;font:400 24px/24px 'Liberation Sans', sans-serif;color:#2b2b2b;letter-spacing:0.740px;-webkit-text-stroke:0.36px #2b2b2b;left:1510.00px;">2023 Q4 Smith Fidelity Roth IRA.pdf</span>
<span class="t" id="ds8" style="top:1388.00px;font:400 20px/20px 'Liberation Sans', sans-serif;color:#7a7a7a;letter-spacing:0.077px;left:1510.00px;">56 KB</span>
<div class="b" style="left:2166px;top:1365px;width:116px;height:35.5px;background:#e9fbfd;border-radius:9px;"></div>
<span class="t" id="db8" style="top:1374.00px;font:400 18px/18px 'Liberation Sans', sans-serif;color:#1a7a96;letter-spacing:0.551px;-webkit-text-stroke:0.3px #1a7a96;left:2223.50px;transform:translateX(-50%);">Retirement</span>
<div class="b" style="left:2302px;top:1365px;width:40px;height:35.5px;background:#fcf3e4;border-radius:9px;"></div>
<span class="t" id="dc8" style="top:1374.00px;font:700 18px/18px 'Liberation Sans', sans-serif;color:#c49a3c;letter-spacing:2.400px;left:2323.00px;transform:translateX(-50%);">×2</span>
<svg class="b" style="left:2371.5px;top:1367.5px;" width="29" height="29" viewBox="0 0 24 24" fill="none" stroke="#9ca3af" stroke-width="1.9" stroke-linecap="round" stroke-linejoin="round"><path d="M2.036 12.322a1.012 1.012 0 0 1 0-.639C3.423 7.51 7.36 4.5 12 4.5c4.638 0 8.573 3.007 9.963 7.178.07.207.07.431 0 .639C20.577 16.49 16.64 19.5 12 19.5c-4.638 0-8.573-3.007-9.963-7.178Z"/><circle cx="12" cy="12" r="3"/></svg>
</div>
<div class="g">
<div class="b" style="left:1343px;top:1540px;width:1099px;height:2px;background:#f8f9f7;"></div>
<div class="b" style="left:1375px;top:1472px;width:32px;height:32px;background:#ffffff;border-radius:5.5px;border:2px solid #6b6b6b;"></div>
<div class="b" style="left:1427px;top:1456px;width:64px;height:64px;background:#fef0f0;border-radius:13px;"></div>
<span class="t" id="dp9" style="top:1480.00px;font:700 18px/18px 'Liberation Sans', sans-serif;color:#d32f2f;letter-spacing:-0.250px;left:1458.50px;transform:translateX(-50%);">PDF</span>
<span class="t" id="dn9" style="top:1461.00px;font:400 24px/24px 'Liberation Sans', sans-serif;color:#2b2b2b;letter-spacing:0.576px;-webkit-text-stroke:0.36px #2b2b2b;left:1510.00px;">2023 Q4 Smith NYCERS 401a.pdf</span>
<span class="t" id="ds9" style="top:1494.00px;font:400 20px/20px 'Liberation Sans', sans-serif;color:#7a7a7a;letter-spacing:0.077px;left:1510.00px;">56 KB</span>
<div class="b" style="left:2166px;top:1471px;width:116px;height:35.5px;background:#e9fbfd;border-radius:9px;"></div>
<span class="t" id="db9" style="top:1480.00px;font:400 18px/18px 'Liberation Sans', sans-serif;color:#1a7a96;letter-spacing:0.551px;-webkit-text-stroke:0.3px #1a7a96;left:2223.50px;transform:translateX(-50%);">Retirement</span>
<div class="b" style="left:2302px;top:1471px;width:40px;height:35.5px;background:#fcf3e4;border-radius:9px;"></div>
<span class="t" id="dc9" style="top:1480.00px;font:700 18px/18px 'Liberation Sans', sans-serif;color:#c49a3c;letter-spacing:2.400px;left:2323.00px;transform:translateX(-50%);">×2</span>
<svg class="b" style="left:2371.5px;top:1473.5px;" width="29" height="29" viewBox="0 0 24 24" fill="none" stroke="#9ca3af" stroke-width="1.9" stroke-linecap="round" stroke-linejoin="round"><path d="M2.036 12.322a1.012 1.012 0 0 1 0-.639C3.423 7.51 7.36 4.5 12 4.5c4.638 0 8.573 3.007 9.963 7.178.07.207.07.431 0 .639C20.577 16.49 16.64 19.5 12 19.5c-4.638 0-8.573-3.007-9.963-7.178Z"/><circle cx="12" cy="12" r="3"/></svg>
</div>
<div class="g">
<div class="b" style="left:1343px;top:1646px;width:1099px;height:2px;background:#f8f9f7;"></div>
<div class="b" style="left:1375px;top:1578px;width:32px;height:32px;background:#ffffff;border-radius:5.5px;border:2px solid #6b6b6b;"></div>
<div class="b" style="left:1427px;top:1562px;width:64px;height:64px;background:#fef0f0;border-radius:13px;"></div>
<span class="t" id="dp10" style="top:1586.00px;font:700 18px/18px 'Liberation Sans', sans-serif;color:#d32f2f;letter-spacing:-0.250px;left:1458.50px;transform:translateX(-50%);">PDF</span>
<span class="t" id="dn10" style="top:1567.00px;font:400 24px/24px 'Liberation Sans', sans-serif;color:#2b2b2b;letter-spacing:0.718px;-webkit-text-stroke:0.36px #2b2b2b;left:1510.00px;">2023 Smith NYCERS Pension Annual Statement.pdf</span>
<span class="t" id="ds10" style="top:1600.00px;font:400 20px/20px 'Liberation Sans', sans-serif;color:#7a7a7a;letter-spacing:0.077px;left:1510.00px;">55 KB</span>
<div class="b" style="left:2166px;top:1577px;width:116px;height:35.5px;background:#e9fbfd;border-radius:9px;"></div>
<span class="t" id="db10" style="top:1586.00px;font:400 18px/18px 'Liberation Sans', sans-serif;color:#1a7a96;letter-spacing:0.551px;-webkit-text-stroke:0.3px #1a7a96;left:2223.50px;transform:translateX(-50%);">Retirement</span>
<div class="b" style="left:2302px;top:1577px;width:40px;height:35.5px;background:#fcf3e4;border-radius:9px;"></div>
<span class="t" id="dc10" style="top:1586.00px;font:700 18px/18px 'Liberation Sans', sans-serif;color:#c49a3c;letter-spacing:2.400px;left:2323.00px;transform:translateX(-50%);">×2</span>
<svg class="b" style="left:2371.5px;top:1579.5px;" width="29" height="29" viewBox="0 0 24 24" fill="none" stroke="#9ca3af" stroke-width="1.9" stroke-linecap="round" stroke-linejoin="round"><path d="M2.036 12.322a1.012 1.012 0 0 1 0-.639C3.423 7.51 7.36 4.5 12 4.5c4.638 0 8.573 3.007 9.963 7.178.07.207.07.431 0 .639C20.577 16.49 16.64 19.5 12 19.5c-4.638 0-8.573-3.007-9.963-7.178Z"/><circle cx="12" cy="12" r="3"/></svg>
</div>
<div class="g">
<div class="b" style="left:1343px;top:1752px;width:1099px;height:2px;background:#f8f9f7;"></div>
<div class="b" style="left:1375px;top:1684px;width:32px;height:32px;background:#ffffff;border-radius:5.5px;border:2px solid #6b6b6b;"></div>
<div class="b" style="left:1427px;top:1668px;width:64px;height:64px;background:#fef0f0;border-radius:13px;"></div>
<span class="t" id="dp11" style="top:1692.00px;font:700 18px/18px 'Liberation Sans', sans-serif;color:#d32f2f;letter-spacing:-0.250px;left:1458.50px;transform:translateX(-50%);">PDF</span>
<span class="t" id="dn11" style="top:1673.00px;font:400 24px/24px 'Liberation Sans', sans-serif;color:#2b2b2b;letter-spacing:0.843px;-webkit-text-stroke:0.36px #2b2b2b;left:1510.00px;">2023 Smith W-2 NYC DEP.pdf</span>
<span class="t" id="ds11" style="top:1706.00px;font:400 20px/20px 'Liberation Sans', sans-serif;color:#7a7a7a;letter-spacing:0.077px;left:1510.00px;">51 KB</span>
<div class="b" style="left:2229px;top:1683px;width:53px;height:35.5px;background:#fcf3e4;border-radius:9px;"></div>
<span class="t" id="db11" style="top:1692.00px;font:400 18px/18px 'Liberation Sans', sans-serif;color:#333333;letter-spacing:1.000px;-webkit-text-stroke:0.3px #333333;left:2256.00px;transform:translateX(-50%);">W2</span>
<div class="b" style="left:2302px;top:1683px;width:40px;height:35.5px;background:#fcf3e4;border-radius:9px;"></div>
<span class="t" id="dc11" style="top:1692.00px;font:700 18px/18px 'Liberation Sans', sans-serif;color:#c49a3c;letter-spacing:2.400px;left:2323.00px;transform:translateX(-50%);">×2</span>
<svg class="b" style="left:2371.5px;top:1685.5px;" width="29" height="29" viewBox="0 0 24 24" fill="none" stroke="#9ca3af" stroke-width="1.9" stroke-linecap="round" stroke-linejoin="round"><path d="M2.036 12.322a1.012 1.012 0 0 1 0-.639C3.423 7.51 7.36 4.5 12 4.5c4.638 0 8.573 3.007 9.963 7.178.07.207.07.431 0 .639C20.577 16.49 16.64 19.5 12 19.5c-4.638 0-8.573-3.007-9.963-7.178Z"/><circle cx="12" cy="12" r="3"/></svg>
</div>
<div class="b" style="left:2442px;top:482px;width:12px;height:1240px;background:#f2efea;"></div>
<div class="b" style="left:2442px;top:482px;width:12px;height:648px;background:#d3d0c9;border-radius:6px;"></div>
</aside>
<footer class="g">
<div class="b" style="left:0px;top:1719px;width:2450px;height:98px;background:#373735;border-top:1px solid #414140;"></div>
<svg class="b" style="left:25px;top:1755px;" width="26" height="26" viewBox="0 0 24 24" fill="none" stroke="#c9c9c9" stroke-width="2" stroke-linecap="round" stroke-linejoin="round"><path d="M4 9h16"/><path d="M4 15h16"/><path d="M10 3 8 21"/><path d="M16 3l-2 18"/></svg>
<span class="t" id="bn" style="top:1758.00px;font:700 21px/21px 'Liberation Sans', sans-serif;color:#cfcfcf;letter-spacing:0.146px;left:67.50px;">BATES NUMBERING</span>
<span class="t" id="pre" style="top:1758.00px;font:400 20.3px/20.3px 'Liberation Sans', sans-serif;color:#a3a3a3;letter-spacing:0.147px;left:307.00px;">PREFIX</span>
<div class="b" style="left:393.75px;top:1742.5px;width:159.5px;height:51.5px;background:#4d4d4d;border-radius:9px;border:2px solid #676767;"></div>
<span class="t" id="smith" style="top:1758.00px;font:700 24px/24px 'Liberation Mono', monospace;color:#a8a8a8;letter-spacing:0.244px;left:412.00px;">SMITH</span>
<span class="t" id="start" style="top:1758.00px;font:400 20.3px/20.3px 'Liberation Sans', sans-serif;color:#a3a3a3;letter-spacing:0.595px;left:577.00px;">START</span>
<div class="b" style="left:658.75px;top:1742.5px;width:127.5px;height:51.5px;background:#4d4d4d;border-radius:9px;border:2px solid #676767;"></div>
<span class="t" id="one" style="top:1756.00px;font:400 24px/24px 'Liberation Sans', sans-serif;color:#ffffff;left:676.00px;">1</span>
<span class="t" id="pad" style="top:1758.00px;font:400 20.3px/20.3px 'Liberation Sans', sans-serif;color:#a3a3a3;letter-spacing:1.016px;left:809.50px;">PADDING</span>
<div class="b" style="left:918.75px;top:1741.5px;width:159.5px;height:52.5px;background:#4d4d4d;border-radius:9px;border:2px solid #676767;"></div>
<span class="t" id="dig" style="top:1756.00px;font:400 24px/24px 'Liberation Sans', sans-serif;color:#ffffff;letter-spacing:1.136px;left:944.00px;">6 digits</span>
<svg class="b" style="left:1047px;top:1753.5px;" width="28" height="28" viewBox="0 0 24 24" fill="none" stroke="#e5e5e5" stroke-width="2" stroke-linecap="round" stroke-linejoin="round"><path d="m6 9 6 6 6-6"/></svg>
<span class="t" id="bnum" style="top:1758.00px;font:400 24px/24px 'Liberation Mono', monospace;color:#d4a843;letter-spacing:0.156px;left:2074.00px;">SMITH000001</span>
<span class="t" id="skip" style="top:1758.00px;font:400 20.5px/20.5px 'Liberation Sans', sans-serif;color:#a3a3a3;letter-spacing:0.292px;left:2256.00px;">Skip Stamps</span>
<div class="b" style="left:2387.5px;top:1755px;width:27px;height:26.5px;background:#ffffff;border-radius:6px;border:2px solid #767676;"></div>
</footer>
</div></body></html>
